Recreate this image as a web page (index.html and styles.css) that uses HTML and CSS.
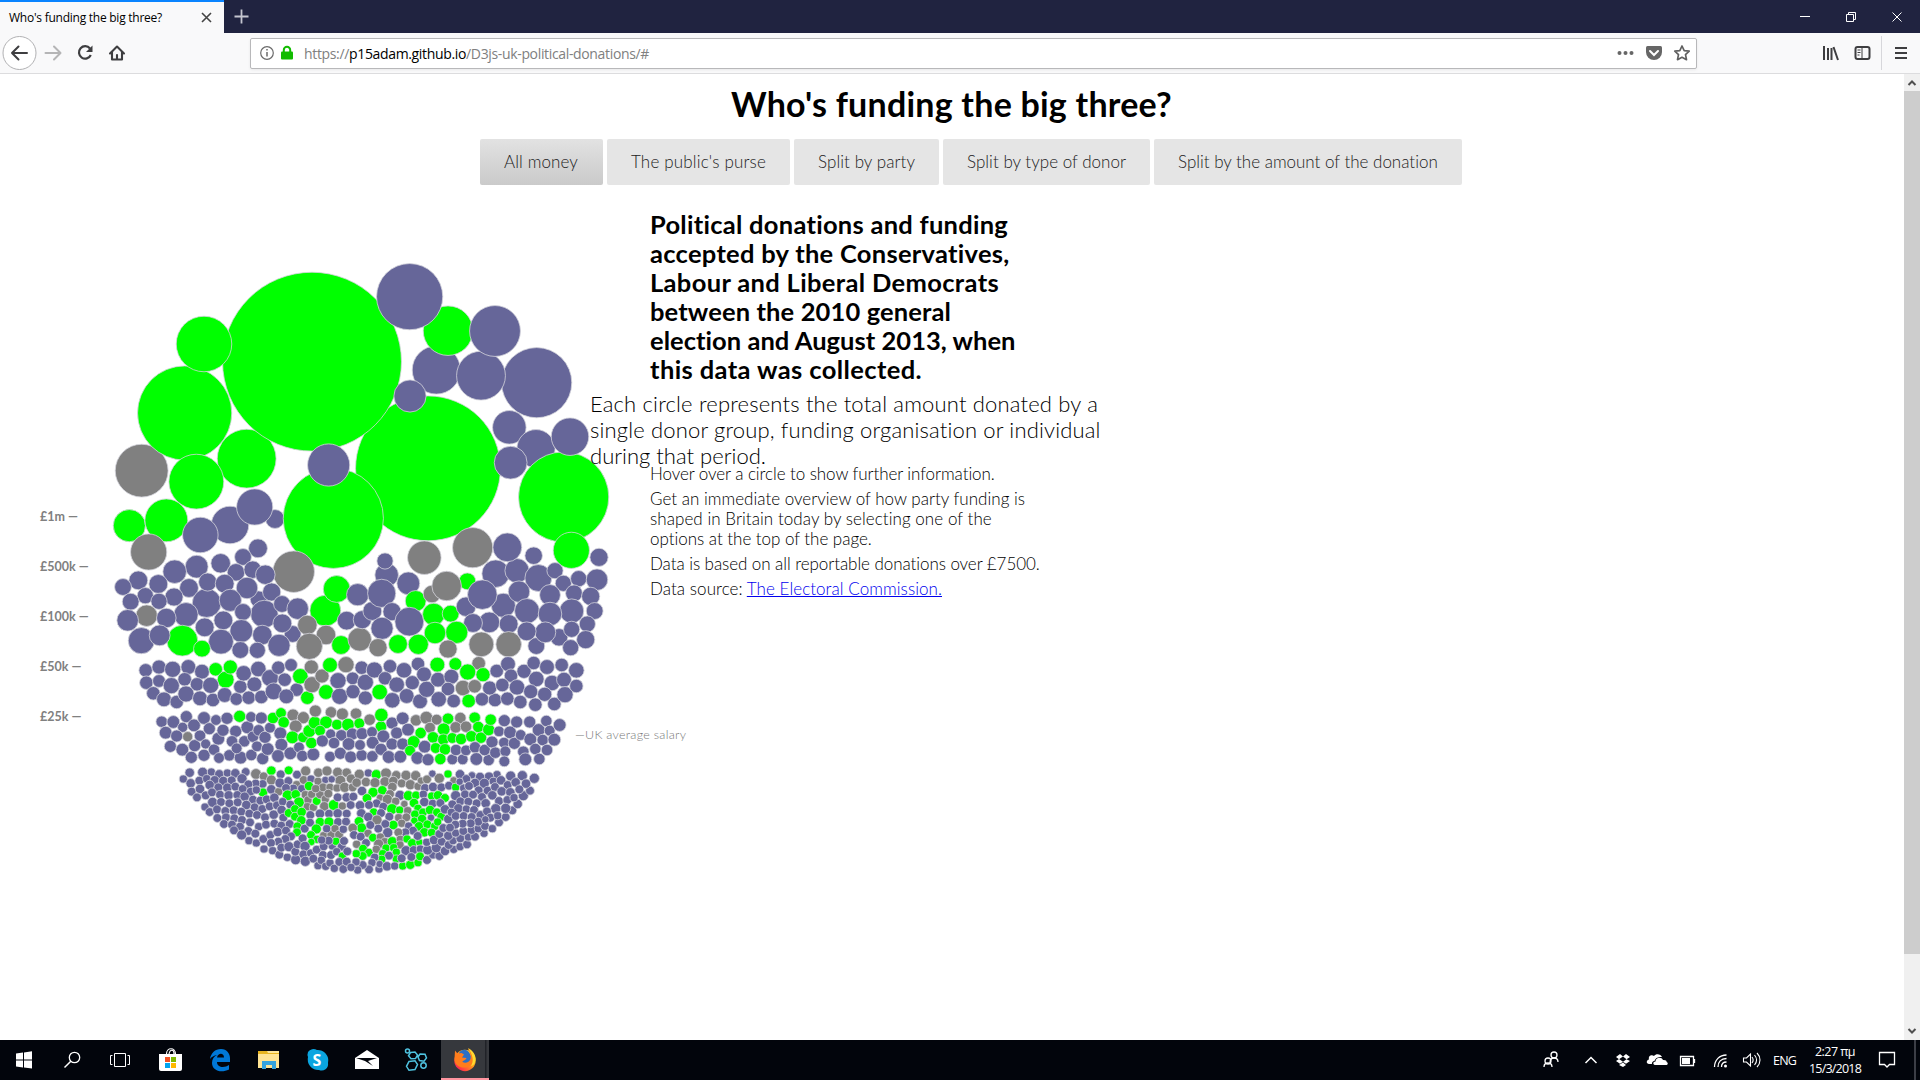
FILE: index.html
```html
<!DOCTYPE html>
<html lang="en">
<head>
<meta charset="utf-8">
<title>Who's funding the big three?</title>
<link rel="stylesheet" href="styles.css">
</head>
<body>
<header class="titlebar">
  <div class="tab"><span data-width="153">Who's funding the big three?</span>
    <svg width="11" height="11" viewBox="0 0 11 11"><path d="M1 1l9 9M10 1l-9 9" stroke="#444" stroke-width="1.6"/></svg>
  </div>
  <svg class="newtab" width="15" height="15" viewBox="0 0 15 15"><path d="M7.5 .5v14M.5 7.5h14" stroke="#c4c5cf" stroke-width="1.8"/></svg>
  <svg class="controls" width="120" height="33" viewBox="0 0 120 33" fill="none" stroke="#fff"><path d="M10 16.500h10M56.500 14.500h7v7h-7zM58.500 14v-1.500h7v7H64M102.500 12.500l9 9M111.500 12.500l-9 9"/></svg>
</header>
<nav class="toolbar">
  <svg class="navicons" width="140" height="40" viewBox="0 0 140 40" fill="none">
    <circle cx="19.500" cy="20" r="16.500" fill="#fff" stroke="#b1b1b3"/>
    <path d="M12 20h15M18.500 13.500L12 20l6.500 6.500" stroke="#3e3e40" stroke-width="2" stroke-linecap="round" stroke-linejoin="round"/>
    <path d="M45.500 20h14M54 13.500l6.500 6.500-6.500 6.500" stroke="#b5b5b6" stroke-width="2" stroke-linecap="round" stroke-linejoin="round"/>
    <path d="M90 15.500a6.200 6.200 0 1 0 .8 6.500" stroke="#3e3e40" stroke-width="2.200"/><path d="M92.500 12.500v6.500h-6.500z" fill="#3e3e40"/>
    <path d="M110 20.500l7-7 7 7M112 19v7.500h10V19M117 26v-4" stroke="#3e3e40" stroke-width="2.100" stroke-linejoin="round" stroke-linecap="round"/>
  </svg>
  <div class="urlbar">
    <svg width="34" height="20" viewBox="0 0 34 20"><circle cx="7" cy="10" r="6.300" fill="none" stroke="#6b6b6b" stroke-width="1.200"/><path d="M7 9v4.500M7 6v1.600" stroke="#6b6b6b" stroke-width="1.500"/><rect x="21" y="8.500" width="12" height="8" rx="1" fill="#12bc00"/><path d="M23.800 9.500V7a3.200 3.200 0 0 1 6.400 0v2.500" fill="none" stroke="#12bc00" stroke-width="2"/></svg>
    <span class="url" data-width="345">https://<b>p15adam.github.io</b>/D3js-uk-political-donations/#</span>
    <svg class="urlicons" width="76" height="20" viewBox="0 0 76 20"><g fill="#666"><circle cx="3.500" cy="10" r="2"/><circle cx="9.500" cy="10" r="2"/><circle cx="15.500" cy="10" r="2"/><path d="M31.500 3h13a1.500 1.500 0 0 1 1.500 1.500V9a8 8 0 0 1-16 0V4.500A1.500 1.500 0 0 1 31.500 3z"/></g><path d="M34 8l4 4 4-4" fill="none" stroke="#fff" stroke-width="2" stroke-linecap="round"/><path d="M66 3l2.200 4.600 5 .6-3.700 3.500 1 5L66 14.300l-4.500 2.400 1-5-3.700-3.500 5-.6z" fill="none" stroke="#606060" stroke-width="1.700" stroke-linejoin="round"/></svg>
  </div>
  <svg class="menuicons" width="100" height="40" viewBox="0 0 100 40" fill="none" stroke="#3e3e40" stroke-width="2"><path d="M4 13v14M8 15v12M11.500 15v12M13.500 14l4.500 13"/><rect x="35.500" y="14" width="14" height="12" rx="2"/><path d="M42 14v12" stroke-width="1"/><path d="M37.500 17h3M37.500 19.500h3M37.500 22h2" stroke-width="1"/><path d="M61.500 3v34" stroke="#d7d7db" stroke-width="1"/><path d="M75 15h12M75 20h12M75 25h12"/></svg>
</nav>
<div class="viewport">
  <main>
    <h1><span data-width="441">Who's funding the big three?</span></h1>
    <div class="buttons">
      <a class="active"><span data-width="74">All money</span></a><a><span data-width="135">The public's purse</span></a><a><span data-width="97">Split by party</span></a><a><span data-width="159">Split by type of donor</span></a><a><span data-width="260">Split by the amount of the donation</span></a>
    </div>
    <div class="content">
      <svg class="chart" id="chart" width="700" height="700" viewBox="0 200 700 700">
        <g class="scale"><text x="40" y="521">£1m —</text><text x="40" y="571">£500k —</text><text x="40" y="621">£100k —</text><text x="40" y="671">£50k —</text><text x="40" y="721">£25k —</text></g>
        <text class="salary" x="575" y="739" textLength="111">—UK average salary</text>
      </svg>
      <section class="text">
        <h2><span data-width="359">Political donations and funding</span><span data-width="360">accepted by the Conservatives,</span><span data-width="349">Labour and Liberal Democrats</span><span data-width="301">between the 2010 general</span><span data-width="366">election and August 2013, when</span><span data-width="272">this data was collected.</span></h2>
        <h3><span data-width="508">Each circle represents the total amount donated by a</span><span data-width="511">single donor group, funding organisation or individual</span><span data-width="176">during that period.</span></h3>
        <p><span data-width="345">Hover over a circle to show further information.</span></p>
        <p><span data-width="375">Get an immediate overview of how party funding is</span><span data-width="342">shaped in Britain today by selecting one of the</span><span data-width="222">options at the top of the page.</span></p>
        <p><span data-width="390">Data is based on all reportable donations over £7500.</span></p>
        <p><span data-width="292">Data source: <a href="#">The Electoral Commission.</a></span></p>
      </section>
    </div>
  </main>
  <aside class="scrollbar">
    <svg width="16" height="17" viewBox="0 0 16 17"><path d="M4.500 11L8 7.500l3.500 3.500" fill="none" stroke="#505050" stroke-width="2"/></svg>
    <div class="thumb"></div>
    <svg class="down" width="16" height="17" viewBox="0 0 16 17"><path d="M4.500 6L8 9.500 11.500 6" fill="none" stroke="#505050" stroke-width="2"/></svg>
  </aside>
</div>
<footer class="taskbar">
  <svg width="490" height="40" viewBox="0 0 490 40">
    <defs><linearGradient id="fox" x1="1" x2="0" y2="1"><stop offset="0" stop-color="#fff13c"/><stop offset=".45" stop-color="#ff9a1a"/><stop offset=".8" stop-color="#ff3647"/><stop offset="1" stop-color="#e31587"/></linearGradient></defs>
    <path d="M16 13.500l7-1v7h-7zM24 12.400l8-1.100v8.200h-8zM16 20.500h7v7l-7-1zM24 20.500h8v8l-8-1.100z" fill="#fff"/>
    <circle cx="74.500" cy="17.500" r="5.200" fill="none" stroke="#fff" stroke-width="1.300"/><path d="M70.800 21.300L64.500 27.500" stroke="#fff" stroke-width="1.500"/>
    <path d="M114.500 13.500h11v13h-11zM112.500 15.500h-2v9h2M127.500 15.500h2v9h-2" fill="none" stroke="#fff"/>
    <path d="M159 14h23v15q0 2-2 2h-19q-2 0-2-2z" fill="#fff"/><path d="M166.500 14c0-7 9-7 9 0M169 14c1-5 5-5 5 0" fill="none" stroke="#fff" stroke-width="1.200"/><path fill="#f25022" d="M165 17h5v5h-5z"/><path fill="#7fba00" d="M171 17h5v5h-5z"/><path fill="#00a4ef" d="M165 23h5v5h-5z"/><path fill="#ffb900" d="M171 23h5v5h-5z"/>
    <path d="M210 19c1-6 5-10 11-10 6 0 9 5 9 9.500V22h-13c0 6 8 6 12 3v4.500c-8 4-17 1-17-6.500 0-4 2-6.500 5-8-3 .5-5.500 2-7 4zm7-1.500h7c0-5-6-5-7 0z" fill="#0078d7"/>
    <path d="M258 11h21v17h-21z" fill="#ffe79a"/><path d="M258 11h9l1 2h11v2h-21z" fill="#e8b520"/><path d="M258 14h21v14h-21z" fill="#ffe494"/><path d="M262 21h14v8h-4v-4h-6v4h-4z" fill="#35a3dd"/>
    <path d="M308 12a6.500 6.500 0 0 1 9-2 10.500 10.500 0 0 1 11 13 6.500 6.500 0 0 1-9 7 10.500 10.500 0 0 1-11-13 7 7 0 0 1 0-5z" fill="#0aa5e0"/><text x="312.500" y="26" class="skype">S</text>
    <path d="M355 18l12-8 12 8v11h-24z" fill="#fff"/><path d="M356 18h21l-9 3 5 5-8-5z" fill="#02050c"/>
    <g fill="none" stroke="#4fc3e0" stroke-width="1.500"><circle cx="407.500" cy="11" r="2"/><path d="M410.500 12.500l4.500-.5 2.500 3-2 3.500-4.500.3-2.500-3zM420 14l5 .3 1.500 3.700-2.500 3.300-4.500-.8-1.500-3.500zM409 21.500l6-.8 2.500 3.800-2.500 5-6 .8-2.500-4z"/><circle cx="423.500" cy="25.500" r="2.700"/></g>
    <path d="M441 0h48v38h-48z" fill="#36383d"/><path d="M485 0h1.500v38H485z" fill="#202228"/><path d="M441 38h48v2h-48z" fill="#ff95a0"/>
    <circle cx="465" cy="20.500" r="10.700" fill="url(#fox)"/><path d="M459 13c3-5 9-4 11 1 3 5 1 10-4 11-5 0-8-4-7-8z" fill="#2a6fc4"/><path d="M455 10.500l2.500 3 4-.5 2.500 1.500-2 3 4.500.5c-1 3-4 2-4 4 3 2 7 0 8-3 1-4-1-7-2.500-10.500 6 3 8 9 6 13-4 9-20 8-19.500-3z" fill="#ff7d1c"/><path d="M468 8c6 3 9 9 7 14-1 3-3 4-4 4 3-5 2-11-3-18z" fill="#ffd92e"/>
  </svg>
  <div class="tray">
    <svg width="230" height="40" viewBox="0 0 230 40" fill="none" stroke="#fff" stroke-width="1.300">
      <circle cx="14" cy="15" r="3"/><path d="M10 23c0-4 2-5 4-5s4 1 4 4"/><circle cx="8" cy="21" r="3"/><path d="M4 27c0-3 2-4 4-4s4 1 4 4"/>
      <path d="M45.500 23l5.500-5.500 5.500 5.500" stroke-width="1.500"/>
      <path d="M76 17l4-3 3 2.500-4 2.800zM83 16.500l3-2.500 4 3-3.500 2.300zM76 21l3-2 4 2.800-3 2zM83 21.800l3.500-2.500L90 21l-4 2.800zM79 25l4-2.500 3 2.500-3 2z" fill="#fff" stroke="none"/>
      <path d="M109 24c-3 0-3-4 0-4.500-1-4 3-5 5-3.500 2-3 7-2 8 1-5-.5-7 2-7.500 4-2 0-3 2-2.500 3z" fill="#fff" stroke="none"/><path d="M115 25c-2.500-.5-2-3.500.5-3.500 0-4 6-5 7.500-1.500 3-.2 4 1 3.500 2 2 .8 1.500 3-.5 3z" fill="#fff" stroke="none"/>
      <path d="M140.500 16.500h13v9h-13zM154.500 19v4"/><path d="M142 18h8v6h-8z" fill="#fff" stroke="none"/>
      <path d="M174.500 27c0-7 5-12 12-12M178 27c0-5 3-8.500 8.500-8.500M181.500 27c0-3 2-5 5-5"/><circle cx="185.500" cy="26" r="1.500" fill="#fff" stroke="none"/>
      <path d="M203.500 18h3l4-4v12l-4-4h-3zM212 17c1.500 2 1.500 4 0 6M214.500 15c2.500 3 2.500 7 0 10M217 13c4 4 4 10 0 14" stroke-width="1.100"/>
    </svg>
    <span class="lang" data-width="23">ENG</span>
    <div class="clock"><span data-width="40">2:27 πμ</span><span data-width="52">15/3/2018</span></div>
    <svg class="notice" width="40" height="40" viewBox="0 0 40 40" fill="none" stroke="#fff" stroke-width="1.300"><path d="M3.500 12.500h15v12h-5l-2.500 2.500-2.500-2.500h-5z"/><path d="M39 0v40" stroke="#5c5f66"/></svg>
  </div>
</footer>
<script src="chart.js"></script>
</body>
</html>
```
FILE: styles.css
```css
* { box-sizing: border-box; }
body { margin: 0; width: 1920px; height: 1080px; overflow: hidden; display: flex; flex-direction: column; background: #fff; font-family: "Open Sans", "Noto Sans", sans-serif; color: #000; }
svg { display: block; flex: none; }
span { white-space: nowrap; }
.titlebar { height: 33px; background: #202340; display: flex; align-items: center; }
.tab { width: 224px; height: 33px; border-top: 2px solid #0a84ff; background: #f9f9fa; display: flex; align-items: center; justify-content: space-between; padding: 0 12px 0 9px; font-size: 12px; }
.newtab { margin-left: 9.500px; }
.controls { margin-left: auto; margin-right: 10px; }
.toolbar { height: 41px; background: #f9f9fa; border-bottom: 1px solid #dcdcde; display: flex; align-items: center; }
.urlbar { width: 1447px; height: 31px; margin-left: 110px; border: 1px solid #b8b8ba; border-radius: 2px; background: #fff; box-shadow: 0 1px 3px #0001; display: flex; align-items: center; padding: 0 9px; font-size: 14px; color: #808080; }
.url { margin-left: 10px; padding-top: 1px; }
.url b { font-weight: 400; color: #000; }
.urlicons { margin-left: auto; margin-right: -5px; }
.menuicons { margin-left: auto; margin-right: 0; }
.viewport { height: 966px; display: flex; }
main { width: 1904px; font-family: Lato, "Open Sans", sans-serif; }
h1 { margin: 8px 0 0; padding-left: 731px; height: 44px; font-size: 34px; font-weight: 700; }
h1 span { line-height: 43px; }
.buttons { display: flex; gap: 4px; margin: 13px 0 0 480px; }
.buttons a { height: 46px; line-height: 46px; padding: 0 24px; border-radius: 2px; background: #e5e5e5; color: #222; font-size: 17px; font-weight: 300; }
.buttons .active { padding-right: 25px; background: linear-gradient(#e2e2e2, #cacaca); }
.content { display: flex; margin-top: 15px; }
.chart { flex: none; }
.text { margin-left: -50px; padding-top: 10px; position: relative; }
.text span { display: block; width: max-content; }
h2 { margin: 0; font-size: 25.500px; line-height: 29px; font-weight: 700; }
h3 { margin: 7px 0 0 -60px; font-size: 22px; line-height: 26px; font-weight: 300; }
p { margin: 5px 0 0; font-size: 17px; line-height: 20px; font-weight: 300; }
h3 + p { margin-top: -5px; }
.text a { color: #00e; }
.scale { font-size: 12.500px; font-weight: 700; fill: #808080; }
.salary { font-size: 12.500px; font-weight: 300; fill: #777; }
.scrollbar { width: 16px; background: #f0f0f0; display: flex; flex-direction: column; }
.thumb { height: 863px; background: #cdcdcd; }
.down { margin-top: auto; }
.taskbar { height: 40px; background: #02050c; color: #fff; display: flex; justify-content: space-between; font-size: 12.500px; }
.skype { font: 700 16px "Open Sans", sans-serif; fill: #fff; }
.tray { display: flex; align-items: center; width: 380px; }
.lang { margin-left: 3px; }
.clock { width: 62px; margin-left: 8px; display: flex; flex-direction: column; align-items: center; line-height: 17.500px; }
.notice { margin-left: auto; margin-right: 4px; }
circle.donor { stroke: #d4d4dc; stroke-width: .8; }
.b { fill: #666699; }
.g { fill: #00ff00; }
.n { fill: #808080; }
```
FILE: chart.js
```js
// Each group: origin of the cell, then "colour x y r" entries in thirds of a pixel.
const cells = [
[100,250,"n 125 662 79,g 254 489 141,g 440 626 88,g 289 695 82,g 88 827 48,g 199 811 64,n 146 906 54,b 390 825 56,b 525 807 28,b 464 771 54,b 301 855 53"],
[360,250,"g 204 655 217,g -144 335 268,g -80 805 150,b 229 360 72,g 264 242 74,b 149 140 99,b 530 398 105,b 363 377 73,b 405 243 76,b 150 438 48,b 448 532 50,b 528 596 57,b 452 638 49,g 611 741 135,b 630 560 56,g 634 901 54,n 338 893 60,g -468 282 83,b -94 645 63"],
[110,530,`b 444 55 28,b 399 81 25,b 332 100 29,b 260 110 34,b 194 125 35,b 378 127 26,b 428 119 26,n 551 125 62,b 466 134 29,b 85 151 28,b 145 162 28,b 39 171 25,b 106 197 24,b 237 174 28,b 290 219 43,b 293 156 27,b 344 161 28,b 446 208 25,b 411 174 32,b 485 186 27,b 62 215 25,b 192 201 27,b 147 214 24,b 361 211 33,b 463 252 41,b 516 222 25,b 563 236 32,n 110 257 32,b 53 271 32,b 228 254 36,b 169 264 29,b 399 246 25,b 340 271 28,b 548 312 25,b 517 280 28,b 284 292 28,b 394 303 34,b 457 315 29,b 507 346 33,b 333 335 37,b 391 360 25,b 442 361 24,b 94 332 39,g 217 332 46,b 149 316 31,g 276 356 25,g 646 242 46,g 680 177 40,n 592 285 29,n 648 315 29,n 598 349 39,g 693 345 28,n 749 328 35,b 743 194 33,b 710 272 28,b 757 269 27,
b 107 421 19,b 147 411 21,b 188 418 24,b 235 411 22,b 276 425 22,g 317 418 20,g 347 449 25,g 361 411 21,b 109 458 19,b 147 453 18,b 184 467 24,b 224 448 20,b 261 463 19,b 302 466 24,b 130 490 20,b 162 508 22,b 200 516 19,b 228 492 24,b 270 505 22,b 309 510 20,b 344 495 22,b 379 507 18,b 391 470 19,b 401 430 23,b 445 417 23,b 433 463 22,b 416 503 20,b 454 501 20,b 480 444 25,b 505 413 20,b 543 405 18,b 524 449 20,b 560 479 19,b 491 484 25,b 529 499 22,g 571 439 23,g 592 503 20,n 604 411 21,n 606 464 24,n 636 438 21,g 660 405 22,n 708 404 24,b 684 452 24,g 648 486 22,b 689 499 24,b 728 445 18,b 729 485 21,b 755 413 20,b 766 457 24,b 766 504 21`],
[360,530,`b 80 135 35,b 75 93 24,n 193 83 50,b 145 160 34,b 37 243 28,b 65 190 42,g 167 213 31,n 216 192 26,g 322 154 25,n 260 168 44,b 96 245 27,b 148 275 43,b 66 295 33,g 221 253 33,g 272 251 25,b 318 230 29,b 430 226 36,b 407 131 41,b 367 194 44,b 471 122 36,b 442 52 43,b 521 77 26,b 535 144 40,b 585 122 24,b 610 160 24,b 656 146 24,b 711 149 32,b 717 82 27,b 642 190 25,b 692 199 27,b 570 195 31,b 477 185 32,b 501 243 37,b 635 243 36,b 570 252 35,b 704 243 25,b 682 282 24,b 677 329 27,b 597 322 26,b 635 298 24,b 632 353 24,b 529 348 25,b 556 307 31,b 500 304 28,b 388 277 31,b 446 282 28,b 339 279 28,g 290 307 33,g 225 309 32,g 114 342 28,g 175 343 30,n 54 353 27,n 264 357 27,n 364 343 37,n 446 343 38,
b 43 420 24,b 90 409 20,b 132 421 23,b 174 402 19,b 75 445 19,b 110 464 23,b 157 458 21,b 192 433 22,g 232 404 22,g 286 402 18,g 59 486 23,b 97 511 23,b 140 498 22,b 180 514 22,b 200 478 24,b 234 449 22,b 274 440 22,b 264 477 20,b 236 508 23,b 281 513 20,n 356 400 20,g 323 426 24,g 369 434 21,n 309 474 23,n 344 469 20,g 326 513 20,b 366 508 20,b 405 510 20,b 389 474 21,b 410 423 20,b 444 402 22,b 453 437 19,b 427 465 20,b 442 506 20,b 481 516 20,b 471 472 23,b 492 424 21,b 521 399 19,b 529 447 23,b 512 485 21,b 526 524 20,b 561 411 22,b 576 459 23,b 554 493 21,b 583 522 20,b 605 405 20,b 612 449 22,b 615 494 24,b 649 421 23,b 649 468 19`],
[140,700,`b 65 65 16,b 100 66 18,b 139 50 17,b 162 76 18,b 128 82 14,b 77 98 18,b 110 108 17,n 143 110 14,b 91 139 17,b 127 149 18,b 164 137 17,b 154 172 17,b 180 107 16,b 192 54 18,b 208 86 17,b 228 60 15,b 197 132 14,b 192 166 17,b 222 149 16,b 235 116 18,b 249 91 17,b 261 55 17,g 299 49 17,b 287 94 17,b 276 124 16,b 268 166 16,b 237 174 15,b 302 173 18,b 313 124 16,b 290 145 15,b 322 82 18,b 333 51 15,b 334 165 16,b 339 110 16,b 351 139 15,b 356 91 16,b 364 54 17,b 368 176 17,b 383 147 18,b 375 112 17,b 390 83 15,g 399 54 16,g 423 39 15,g 431 67 16,b 421 100 18,b 424 134 18,b 414 168 18,b 451 160 18,n 459 45 17,n 490 53 17,n 467 79 18,g 457 112 18,g 489 112 15,b 477 142 15,b 487 168 16,b 520 163 18,g 514 129 16,g 508 93 18,g 524 68 18,n 526 33 17,n 573 37 16,n 607 42 17,n 648 41 16,g 558 67 18,g 591 74 15,g 624 74 18,g 540 92 15,b 547 123 17,b 572 102 14,b 604 106 16,b 637 102 17,b 582 129 16,b 570 170 15,b 601 160 17,b 626 132 18,b 632 171 17,
b 149 218 13,b 188 217 14,b 214 216 11,b 238 223 13,b 262 219 11,b 286 220 13,b 317 216 12,n 348 222 15,n 371 229 12,g 394 212 13,b 422 223 12,g 446 211 12,b 471 224 12,n 497 213 14,b 130 237 11,b 152 250 13,b 178 242 12,b 200 236 11,b 224 241 13,b 250 243 13,b 275 241 12,b 306 236 14,n 394 240 14,b 368 252 12,b 347 250 11,b 325 253 12,b 155 275 12,b 180 267 13,b 209 255 13,b 235 262 12,b 262 263 13,b 286 260 12,b 308 267 12,b 332 275 12,g 369 278 13,b 349 270 11,b 394 268 13,n 416 275 11,b 420 249 14,b 445 243 12,n 470 254 11,n 491 240 12,b 513 237 11,b 485 266 11,b 460 265 11,b 438 264 12,b 171 292 12,b 197 286 12,b 216 277 12,b 240 284 12,b 266 286 13,b 292 285 12,b 314 290 13,b 339 299 12,b 361 302 12,b 380 298 12,b 403 293 13,g 443 286 15,g 467 283 13,n 496 284 11,g 507 258 13,n 534 244 11,
b 195 321 11,b 218 307 14,b 243 306 12,b 268 310 12,b 293 307 12,b 319 315 13,b 344 322 12,b 367 327 12,b 389 319 12,b 411 316 12,b 428 305 11,g 477 307 15,b 451 314 12,n 504 300 11,n 515 283 11,n 502 320 11,n 520 322 11,g 530 303 12,n 540 283 12,n 556 297 11,n 553 319 13,g 581 315 15,n 607 318 11,b 209 336 12,b 231 328 12,b 256 333 12,b 281 331 12,b 304 335 12,b 328 341 12,b 351 345 12,b 375 352 12,b 401 344 13,b 425 330 13,b 430 353 12,g 446 339 12,g 465 327 12,g 465 350 12,g 485 336 13,g 484 361 13,b 232 354 12,b 258 352 12,b 283 355 12,b 306 360 12,b 330 367 12,b 356 380 11,b 378 374 12,b 403 371 12,b 424 377 12,b 449 372 12,g 472 379 12,b 494 386 12,g 471 397 12,b 511 345 12,b 540 341 13,b 567 341 12,b 593 340 13,b 620 341 12,b 510 368 12,g 540 366 13,g 567 366 14,b 594 366 12,b 618 365 12,g 529 387 14,g 513 405 12,g 531 418 11,g 514 426 10,n 551 407 11,n 574 404 12,n 585 386 11,b 560 386 11,n 597 404 12,b 610 388 11,
b 252 372 12,b 276 374 12,b 300 380 12,b 282 391 12,b 325 393 12,b 346 401 12,b 305 405 14,b 327 422 11,b 349 429 11,b 370 417 12,b 391 405 12,b 413 396 13,b 438 392 12,b 453 409 12,b 436 417 12,b 415 425 12,b 393 429 12,b 372 447 11,b 398 452 11,b 418 464 12,b 424 443 12,b 442 472 11,b 447 440 14,b 467 479 14,b 466 455 12,b 473 433 12,b 488 415 12,b 495 439 14,b 490 463 12,b 496 484 14,b 512 459 11,b 520 476 12,b 534 497 11,b 530 449 12,b 551 439 12,b 549 465 12,b 544 481 11,b 557 499 11,b 570 489 11,b 583 505 11,b 573 465 12,b 577 438 11,g 588 424 11,b 566 422 12,b 545 420 11,b 605 440 12,b 590 455 11,g 607 468 11,b 598 486 12,b 610 507 12,b 620 485 12,b 622 454 12,b 612 423 12,
n 535 218 13,n 561 213 14,n 593 217 14,n 620 218 13,n 601 242 15,n 633 236 13,b 556 240 10,b 575 238 10,n 549 262 12,n 570 262 11,n 591 264 11,n 614 262 14,n 638 262 12,n 527 266 11,n 565 281 12,b 593 292 12,b 620 292 13,b 632 315 12`],
[350,700,`g 28 70 15,n 59 59 16,g 93 80 16,g 94 45 19,b 126 69 17,b 158 55 18,b 36 101 17,b 66 96 15,b 35 166 16,b 67 169 16,b 30 135 15,b 68 128 18,b 100 109 18,b 93 148 17,b 126 132 17,b 140 99 17,b 116 171 18,b 151 170 18,b 158 132 17,b 174 89 18,n 198 61 16,n 229 53 18,n 260 59 15,g 294 56 16,n 331 54 16,g 212 99 16,g 191 126 18,g 180 152 15,b 202 174 18,b 234 179 17,b 224 140 18,n 240 83 15,g 281 88 18,g 249 112 16,g 280 119 16,g 257 144 15,g 285 148 16,g 271 177 16,b 307 178 15,b 338 178 15,b 318 150 16,b 348 151 15,g 307 114 15,g 333 117 16,n 317 82 16,n 348 80 16,g 374 53 16,g 385 81 16,g 364 109 16,g 393 113 16,g 416 89 17,g 422 59 16,b 375 142 16,b 379 177 18,b 416 180 16,b 404 150 16,b 426 126 17,b 447 94 15,b 436 158 16,b 463 62 17,b 480 97 18,b 462 128 15,b 466 154 15,b 463 184 15,b 500 66 17,b 493 130 17,b 512 105 15,b 520 155 16,b 526 178 18,b 539 66 17,b 541 118 18,b 566 90 18,b 556 147 16,b 568 177 16,b 589 63 16,b 599 92 15,b 578 120 16,b 591 150 16,b 613 119 18,b 629 75 18,
n 28 223 14,b 55 219 11,g 79 224 14,n 108 220 15,n 139 226 13,n 168 226 14,n 197 227 14,n 20 248 13,n 48 246 13,n 75 248 14,n 105 245 14,n 130 243 13,n 155 250 12,n 181 254 14,n 204 259 11,n 213 242 10,n 231 238 12,b 247 221 10,n 268 235 14,g 294 222 11,n 311 241 10,b 330 223 13,b 36 273 13,g 69 277 14,g 97 271 13,g 51 295 13,n 127 261 13,b 10 290 12,b 150 286 14,n 120 282 12,n 90 293 10,n 112 298 14,n 137 304 11,b 80 310 12,g 175 287 14,g 198 286 12,g 192 309 13,n 163 312 10,b 225 264 12,b 249 261 13,b 274 262 12,b 297 257 12,g 317 262 11,b 220 283 11,g 245 288 11,g 264 286 13,g 285 294 12,b 223 306 13,b 248 311 12,b 271 309 12,b 317 287 14,b 341 264 11,
b 30 316 13,b 57 315 12,b 100 320 12,g 126 327 15,g 149 330 11,n 173 332 11,g 204 325 11,g 195 343 12,g 219 337 12,g 240 330 13,g 261 337 12,g 274 350 12,b 243 353 10,g 216 357 13,g 193 362 10,g 207 379 13,g 232 373 12,g 254 379 11,g 263 366 11,g 223 397 13,g 245 398 12,b 34 340 13,g 71 336 11,b 55 351 13,b 93 339 12,n 81 360 14,b 118 350 12,n 146 353 11,n 169 352 12,n 155 370 11,g 130 375 13,b 106 372 12,b 176 378 11,b 189 392 12,b 166 397 12,n 145 397 12,b 113 398 14,b 85 386 12,g 27 364 13,g 35 384 14,b 61 375 12,n 54 400 11,n 8 384 13,b 12 405 12,b 32 410 12,g 69 413 12,n 91 411 11,n 104 425 11,n 86 432 14,b 48 429 12,n 20 433 11,g 127 425 14,n 151 418 11,n 150 435 11,g 171 417 11,g 187 430 13,g 208 427 10,b 203 408 12,b 168 452 14,b 191 450 12,b 211 447 11,
g 39 446 12,g 57 458 12,g 38 468 12,g 19 461 11,n 79 448 11,g 108 444 11,g 131 443 11,g 98 461 11,g 139 457 11,g 139 477 11,b 117 467 12,g 95 478 11,b 74 472 11,b 66 488 11,b 87 507 11,b 57 508 12,b 38 495 12,b 23 510 11,b 18 486 11,b 3 502 11,b 89 492 10,b 111 499 13,b 134 498 11,g 158 498 11,g 181 494 13,g 204 488 11,g 210 469 12,b 155 475 12,b 184 471 12,b 231 480 12,b 249 464 12,b 268 468 12,b 233 450 14,b 259 443 14,b 285 453 13,b 311 448 11,b 330 440 11,b 351 433 12,b 230 427 11,b 252 420 13,b 275 425 12,b 296 435 12,b 309 422 11,b 331 415 12,b 355 411 11,b 375 410 12,b 402 400 11,b 268 402 12,b 295 407 13,b 317 399 11,b 340 393 12,b 365 390 12,b 385 386 11,b 405 378 12,b 427 386 11,b 447 367 12,b 467 351 12,b 487 331 12,b 503 312 13,b 520 287 14,b 540 272 12,b 553 235 14,b 517 227 14,b 482 228 14,b 441 224 11,b 417 230 13,b 390 231 13,b 366 226 10,b 349 237 12,
b 375 249 13,b 403 250 14,b 430 244 11,b 453 241 13,b 473 255 12,b 497 247 13,b 528 251 13,b 329 245 10,b 357 258 12,b 386 271 12,b 413 272 12,b 435 261 12,b 455 274 13,b 481 277 13,b 508 268 12,b 345 283 12,b 369 284 12,b 396 291 12,b 427 286 13,b 447 303 12,b 472 300 12,b 492 293 11,b 467 325 14,b 331 304 12,b 355 305 12,b 380 310 12,b 407 310 13,b 437 326 14,b 307 313 12,b 285 328 13,b 325 325 13,b 349 327 11,b 372 330 12,b 391 345 12,b 411 334 12,b 421 353 12,b 443 347 11,b 295 357 13,b 304 337 11,b 317 348 12,b 341 348 12,b 365 351 12,b 385 365 12,b 406 358 10,b 362 370 12,b 338 371 12,b 316 374 12,b 280 384 12,b 300 383 12`]
];
const svg = document.getElementById("chart");
for (const [ox, oy, list] of cells) {
  for (const item of list.split(",")) {
    const [kind, x, y, r] = item.trim().split(" ");
    const c = document.createElementNS("http://www.w3.org/2000/svg", "circle");
    c.setAttribute("class", "donor " + kind);
    c.setAttribute("cx", (ox + x / 3).toFixed(2));
    c.setAttribute("cy", (oy + y / 3).toFixed(2));
    c.setAttribute("r", (r / 3 + (r < 20 ? 0.4 : 0.1)).toFixed(2));
    svg.appendChild(c);
  }
}
// Track each line of text to its measure.
for (const s of document.querySelectorAll("[data-width]")) {
  const range = document.createRange();
  range.selectNodeContents(s);
  const gap = (s.dataset.width - range.getBoundingClientRect().width) / s.textContent.length;
  s.style.letterSpacing = gap.toFixed(3) + "px";
}
```
